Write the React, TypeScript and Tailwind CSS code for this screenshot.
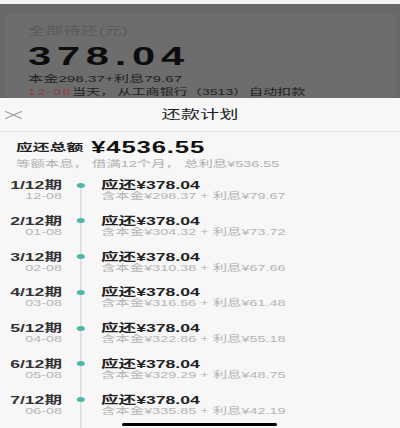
import React from "react";

const rows = [
  { p: "1/12期", d: "12-08", a: "298.37", i: "79.67" },
  { p: "2/12期", d: "01-08", a: "304.32", i: "73.72" },
  { p: "3/12期", d: "02-08", a: "310.38", i: "67.66" },
  { p: "4/12期", d: "03-08", a: "316.56", i: "61.48" },
  { p: "5/12期", d: "04-08", a: "322.86", i: "55.18" },
  { p: "6/12期", d: "05-08", a: "329.29", i: "48.75" },
  { p: "7/12期", d: "06-08", a: "335.85", i: "42.19" },
];

export default function App() {
  return (
    <div className="relative w-[400px] h-[428px] overflow-hidden bg-[#f7f7f7] font-['Liberation_Sans','Noto_Sans_CJK_SC',sans-serif]">
      <div className="w-[250px] origin-top-left scale-x-[1.6]">
        {/* dimmed background page */}
        <div className="h-[98px] overflow-hidden bg-[#686868] flex flex-col">
          <div className="h-[4px] bg-[#f2f2f2]" />
          <div className="h-[12px]" />
          <div className="mx-[2.5px] flex-1 bg-[#6d6d6d] pl-[15px] pt-[10px] flex flex-col">
            <div className="text-[11px] leading-[14px] text-[#595959] whitespace-nowrap">全部待还(元)</div>
            <div className="mt-[4.5px] text-[26px] leading-[26px] font-bold tracking-[3.6px] text-[#0d0d0d]">378.04</div>
            <div className="mt-[4.5px] text-[9.5px] leading-[12px] text-[#1f1f1f] whitespace-nowrap">本金298.37+利息79.67</div>
            <div className="mt-[1px] flex text-[8.8px] leading-[12px] text-[#1f1f1f] whitespace-nowrap">
              <span className="text-[#8c3f3f] tracking-[1px]">12-08</span>
              <span>当天，</span>
              <span className="ml-[2px]">从工商银行</span>
              <span>（3513）</span>
              <span className="ml-[1px]">自动扣款</span>
            </div>
          </div>
        </div>

        {/* sheet */}
        <div className="bg-[#f7f7f7]">
          <div className="h-[34px] flex items-center border-b border-[#e4e4e4]">
            <div className="ml-[3px] w-[11px] h-[8px] flex items-center">
              <svg width="11" height="8" viewBox="0 0 11 8" className="block">
                <path d="M0.3 0.3 L10.7 7.7 M10.7 0.3 L0.3 7.7" stroke="#9a9a9a" strokeWidth="0.9" fill="none" />
              </svg>
            </div>
            <div className="flex-1 text-center text-[12px] leading-[14px] text-[#222]">还款计划</div>
            <div className="w-[14px]" />
          </div>

          <div className="pl-[10px] pt-[6px]">
            <div className="h-[20px] flex items-center whitespace-nowrap">
              <span className="text-[10.5px] font-bold text-[#222]">应还总额</span>
              <span className="ml-[5px] text-[16px] font-bold tracking-[0.55px] text-[#111]">¥4536.55</span>
            </div>
            <div className="text-[9px] leading-[12px] text-[#b0b0b0] whitespace-nowrap">
              等额本息， 借满12个月， 总利息¥536.55
            </div>
          </div>

          <div className="pt-[9px] flex flex-col">
            {rows.map((r, idx) => (
              <div key={r.p} className="h-[35.75px] flex">
                <div className="w-[38.75px] flex flex-col items-end whitespace-nowrap">
                  <div className="text-[11px] leading-[12px] font-bold text-[#333]">{r.p}</div>
                  <div className="text-[9px] leading-[10px] text-[#b5b5b5]">{r.d}</div>
                </div>
                <div className="ml-[9.35px] w-[5px] flex flex-col items-center">
                  <div className={idx === 0 ? "h-[3.5px] w-[0.7px]" : "h-[3.5px] w-[0.7px] bg-[#dcdcdc]"} />
                  <div className="h-[5px] w-[5px] rounded-full bg-[#52b5ab]" />
                  <div className="flex-1 w-[0.7px] bg-[#dcdcdc]" />
                </div>
                <div className="ml-[10px] flex flex-col whitespace-nowrap">
                  <div className="text-[11px] leading-[12px] font-bold text-[#222]">应还¥378.04</div>
                  <div className="text-[9px] leading-[10px] text-[#b5b5b5]">
                    含本金¥{r.a} + 利息¥{r.i}
                  </div>
                </div>
              </div>
            ))}
          </div>
        </div>
      </div>
      <div className="absolute left-[122px] top-[422.5px] w-[155px] h-[3.5px] rounded-full bg-black" />
    </div>
  );
}
